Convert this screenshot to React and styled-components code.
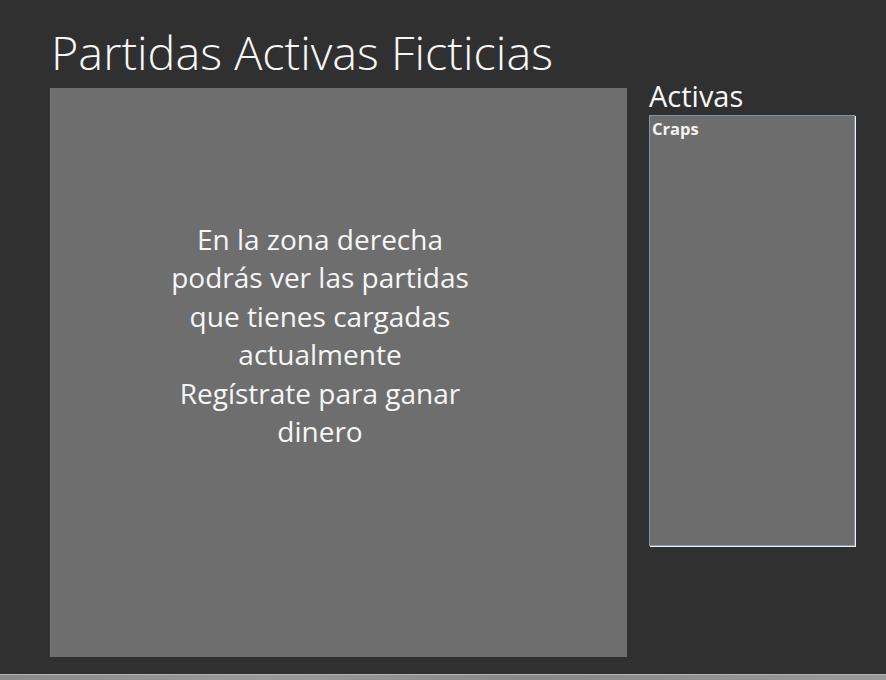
import styled, { createGlobalStyle } from "styled-components";

const GlobalStyle = createGlobalStyle`
  html, body {
    margin: 0;
    padding: 0;
    background: #303030;
  }
  body {
    font-family: "Open Sans", "Noto Sans", sans-serif;
    color: #f4f4f4;
  }
`;

const games = ["Craps"];

const App = () => {
  return (
    <Page>
      <GlobalStyle />
      <Header>
        <Title>Partidas Activas Ficticias</Title>
      </Header>
      <Columns>
        <MainPanel>
          <Message>
            En la zona derecha
            <br />
            podrás ver las partidas
            <br />
            que tienes cargadas
            <br />
            actualmente
            <br />
            Regístrate para ganar
            <br />
            dinero
          </Message>
        </MainPanel>
        <Sidebar>
          <SideTitle>Activas</SideTitle>
          <GameList>
            {games.map((game) => (
              <GameItem key={game}>{game}</GameItem>
            ))}
          </GameList>
        </Sidebar>
      </Columns>
      <BottomBar />
    </Page>
  );
};

//Styled
const Page = styled.div`
  display: flex;
  flex-direction: column;
  min-height: 680px;
  background: #303030;
`;

const Header = styled.header`
  height: 83px;
  padding: 25px 0 0 51px;
  box-sizing: border-box;
`;

const Title = styled.h1`
  margin: 0;
  font-size: 46.8px;
  font-weight: 300;
  line-height: 54px;
  color: #f7f7f7;
  white-space: nowrap;
`;

const Columns = styled.div`
  display: flex;
  align-items: flex-start;
  gap: 22px;
  padding-left: 50px;
`;

const MainPanel = styled.section`
  margin-top: 5px;
  width: 577px;
  height: 569px;
  box-sizing: border-box;
  background: #6e6e6e;
  border-left: 1px solid #787878;
  padding: 132px 38px 0 0;
`;

const Message = styled.p`
  margin: 0;
  text-align: center;
  font-size: 28px;
  line-height: 38.4px;
  color: #f6f6f6;
  white-space: nowrap;
`;

const Sidebar = styled.aside`
  display: flex;
  flex-direction: column;
  width: 206px;
`;

const SideTitle = styled.h2`
  margin: 0 0 6px;
  font-size: 29px;
  font-weight: 400;
  line-height: 26px;
  color: #f7f7f7;
`;

const GameList = styled.ul`
  list-style: none;
  margin: 0;
  padding: 2px 0;
  height: 431px;
  box-sizing: border-box;
  background: #6d6d6d;
  border: 1px solid #8494a6;
  box-shadow: 1px 1px 0 #f2f2f2;
`;

const GameItem = styled.li`
  padding: 0 2px;
  font-size: 16.5px;
  font-weight: 700;
  line-height: 22px;
  color: #f2f2f2;
`;

const BottomBar = styled.div`
  margin-top: auto;
  height: 5px;
  border-top: 1px solid #b4b4b4;
  background: linear-gradient(90deg, #8a8a8a, #9a9a9a 30%, #888 60%, #9a9a9a);
`;

export default App;
